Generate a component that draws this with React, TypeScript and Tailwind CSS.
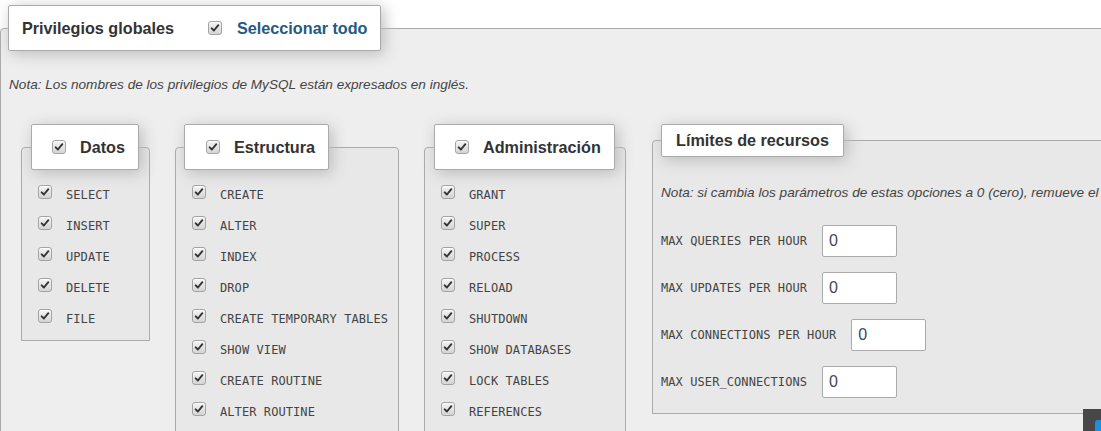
import React from "react";

const mono = "font-['DejaVu_Sans_Mono',monospace]";
const sans = "font-['Liberation_Sans',Arial,sans-serif]";

function Check() {
  return (
    <span className="inline-flex h-[14px] w-[14px] shrink-0 items-center justify-center rounded-[3px] border border-[#a3a3a3] bg-linear-to-b from-[#f4f4f4] to-[#d4d4d4] shadow-[inset_0_1px_1px_#fff]">
      <svg viewBox="0 0 12 12" className="h-[10px] w-[10px]">
        <path d="M2 6.4 L4.7 9 L10 2.6" fill="none" stroke="#333" strokeWidth="2.3" strokeLinecap="round" strokeLinejoin="round" />
      </svg>
    </span>
  );
}

type GroupProps = {
  title: string;
  items: string[];
  width: string;
  legendMl: string;
  legendPl: string;
};

function Group({ title, items, width, legendMl, legendPl }: GroupProps) {
  return (
    <fieldset className={`${width} shrink-0 rounded-t-[4px] border border-[#aaa] bg-[#e8e8e8] pb-[6px]`}>
      <legend
        className={`${legendMl} ${legendPl} flex h-[46px] items-center gap-[14px] rounded-[2px] border border-[#aaa] bg-white pr-[13px] text-[16.2px] font-bold text-[#333] shadow-[3px_3px_15px_#bbb]`}
      >
        <Check />
        <span>{title}</span>
      </legend>
      <div className="pl-[16px] pt-[9px]">
        {items.map((item) => (
          <div key={item} className="flex h-[31px] items-center gap-[14px] whitespace-nowrap">
            <span className="mb-[5px]">
              <Check />
            </span>
            <span className={`${mono} text-[12px] tracking-[0.08px] text-[#444]`}>{item}</span>
          </div>
        ))}
      </div>
    </fieldset>
  );
}

const limits = [
  "MAX QUERIES PER HOUR",
  "MAX UPDATES PER HOUR",
  "MAX CONNECTIONS PER HOUR",
  "MAX USER_CONNECTIONS",
];

export default function App() {
  return (
    <div className={`${sans} relative h-[431px] w-full overflow-hidden bg-white`}>
      <fieldset className="mt-[5px] w-[1400px] rounded-tl-[4px] border border-[#aaa] bg-[#eee] pl-[7px]">
        <legend className="flex h-[46px] items-center rounded-[2px] border border-[#aaa] bg-white pl-[13px] pr-[13px] shadow-[3px_3px_15px_#bbb]">
          <span className="text-[16.2px] font-bold text-[#333]">Privilegios globales</span>
          <span className="ml-[34px]">
            <Check />
          </span>
          <span className="ml-[15px] text-[16.2px] font-bold text-[#235a81]">Seleccionar todo</span>
        </legend>

        <p className="mt-[26px] ml-[1px] text-[13.6px] italic leading-[16px] text-[#444]">
          Nota: Los nombres de los privilegios de MySQL están expresados en inglés.
        </p>

        <div className="mt-[31px] ml-[13px] flex items-start gap-[25px]">
          <Group
            title="Datos"
            width="w-[129px]"
            legendMl="ml-[9px]"
            legendPl="pl-[20px]"
            items={["SELECT", "INSERT", "UPDATE", "DELETE", "FILE"]}
          />
          <Group
            title="Estructura"
            width="w-[224px]"
            legendMl="ml-[8px]"
            legendPl="pl-[21px]"
            items={[
              "CREATE",
              "ALTER",
              "INDEX",
              "DROP",
              "CREATE TEMPORARY TABLES",
              "SHOW VIEW",
              "CREATE ROUTINE",
              "ALTER ROUTINE",
            ]}
          />
          <Group
            title="Administración"
            width="w-[202px]"
            legendMl="ml-[9px]"
            legendPl="pl-[20px]"
            items={[
              "GRANT",
              "SUPER",
              "PROCESS",
              "RELOAD",
              "SHUTDOWN",
              "SHOW DATABASES",
              "LOCK TABLES",
              "REFERENCES",
            ]}
          />

          <fieldset className="ml-[1px] w-[600px] shrink-0 rounded-t-[4px] border border-[#aaa] bg-[#e8e8e8] pb-[15px] pl-[8px]">
            <legend className="flex h-[33px] items-center rounded-[2px] border border-[#aaa] bg-white px-[14px] text-[16.2px] font-bold text-[#333] shadow-[3px_3px_15px_#bbb]">
              Límites de recursos
            </legend>
            <p className="mt-[28px] whitespace-nowrap text-[13.6px] italic leading-[16px] text-[#444]">
              Nota: si cambia los parámetros de estas opciones a 0 (cero), remueve el límite.
            </p>
            <div className="mt-[24px] flex flex-col gap-[15px]">
              {limits.map((label) => (
                <div key={label} className="flex items-center gap-[15px]">
                  <span className={`${mono} text-[12px] tracking-[0.08px] text-[#444]`}>{label}</span>
                  <div className="flex h-[32px] w-[75px] items-center rounded-[2px] border border-[#aaa] bg-white pl-[6px] pb-[1px] text-[16px] text-[#3d4a5c]">
                    0
                  </div>
                </div>
              ))}
            </div>
          </fieldset>
        </div>
      </fieldset>

      <div className="absolute bottom-0 right-0 h-[22px] w-[18px] overflow-hidden bg-[#474747]">
        <div className="ml-[12px] mt-[11px] h-[14px] w-[14px] rounded-[3px] bg-[#1e8fdc]" />
      </div>
    </div>
  );
}
